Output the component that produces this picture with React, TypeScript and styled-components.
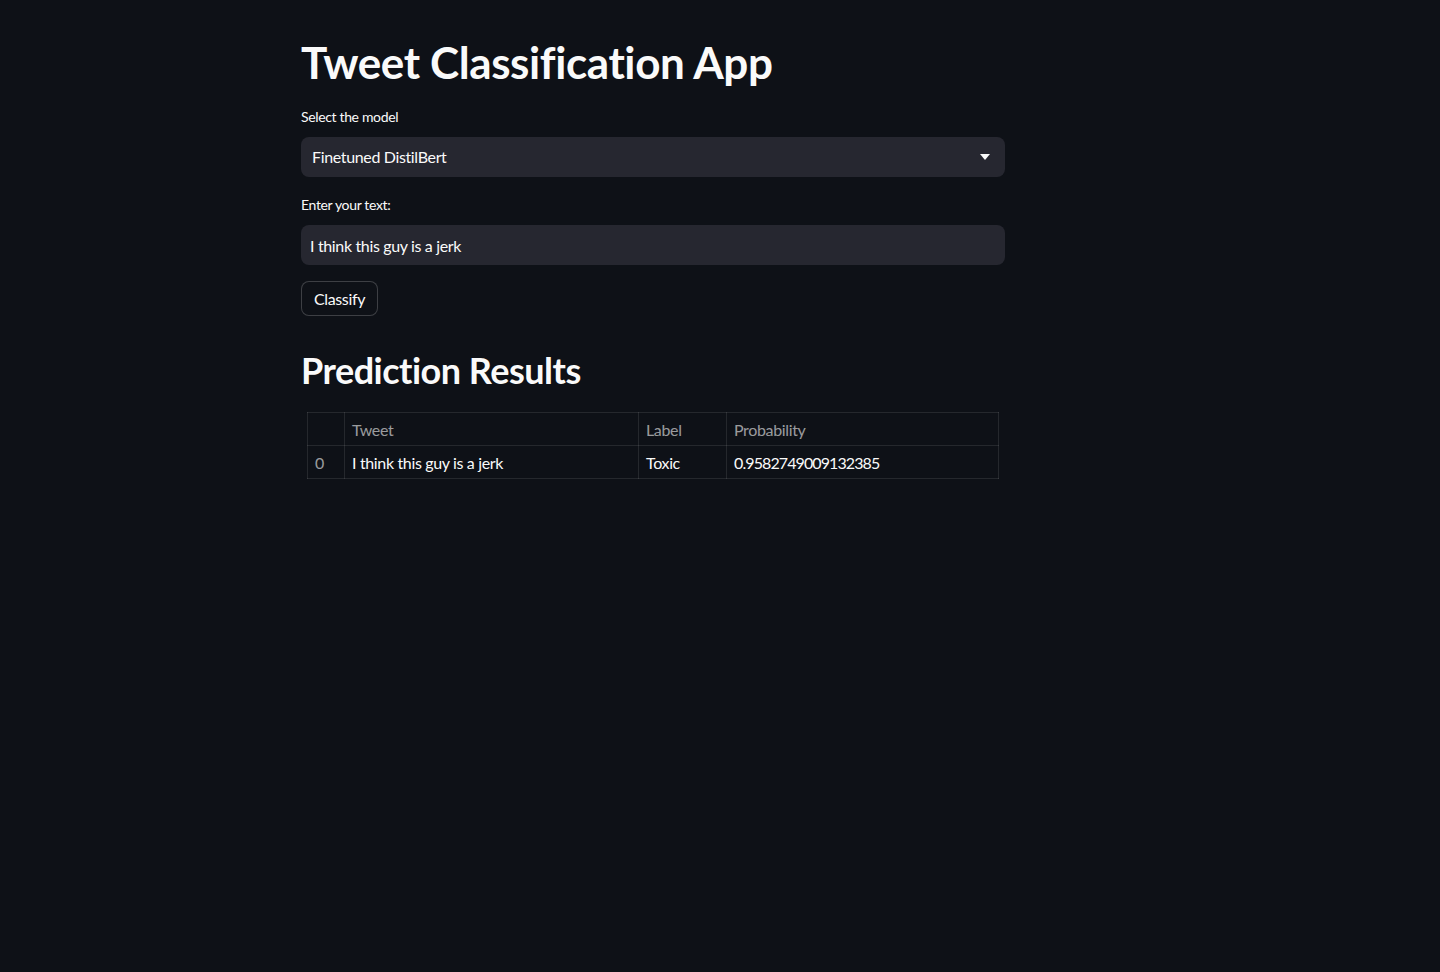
import React from 'react'
import styled, { createGlobalStyle } from 'styled-components'

const GlobalStyle = createGlobalStyle`
  html, body {
    margin: 0;
    padding: 0;
    background-color: #0e1117;
  }
  body {
    font-family: Lato, "Noto Sans", sans-serif;
    color: #fafafa;
    letter-spacing: -0.35px;
  }
`

const rows = [
  { index: 0, tweet: 'I think this guy is a jerk', label: 'Toxic', probability: '0.9582749009132385' },
]

export default function App() {
  return (
    <Page>
      <GlobalStyle />
      <Main>
        <Title>Tweet Classification App</Title>

        <Field>
          <FieldLabel>Select the model</FieldLabel>
          <SelectBox>
            <span>Finetuned DistilBert</span>
            <svg width="10" height="6" viewBox="0 0 10 6">
              <path d="M0 0 L10 0 L5 6 Z" fill="#fafafa" />
            </svg>
          </SelectBox>
        </Field>

        <Field>
          <FieldLabel>Enter your text:</FieldLabel>
          <TextInput defaultValue="I think this guy is a jerk" />
        </Field>

        <Button>Classify</Button>

        <Subtitle>Prediction Results</Subtitle>

        <Table>
          <thead>
            <tr>
              <Th $w={37}></Th>
              <Th $w={294}>Tweet</Th>
              <Th $w={88}>Label</Th>
              <Th>Probability</Th>
            </tr>
          </thead>
          <tbody>
            {rows.map(r => (
              <tr key={r.index}>
                <IndexCell>{r.index}</IndexCell>
                <Td>{r.tweet}</Td>
                <Td>{r.label}</Td>
                <NumberCell>{r.probability}</NumberCell>
              </tr>
            ))}
          </tbody>
        </Table>
      </Main>
    </Page>
  )
}

const Page = styled.div`
  min-height: 972px;
  background-color: #0e1117;
`

const Main = styled.div`
  width: 704px;
  margin-left: 301px;
  padding-top: 33px;
  display: flex;
  flex-direction: column;
`

const Title = styled.h1`
  margin: 0 0 16px 0;
  font-size: 44px;
  font-weight: 700;
  line-height: 58px;
  letter-spacing: -0.4px;
  color: #fafafa;
`

const Field = styled.div`
  display: flex;
  flex-direction: column;
  margin-bottom: 18px;
`

const FieldLabel = styled.label`
  font-size: 14px;
  line-height: 20px;
  height: 20px;
  margin-bottom: 10px;
  color: #fafafa;
`

const SelectBox = styled.div`
  height: 40px;
  box-sizing: border-box;
  background-color: #262730;
  border-radius: 8px;
  display: flex;
  align-items: center;
  justify-content: space-between;
  padding: 0 15px 1px 11px;
  font-size: 16px;
  color: #fafafa;
`

const TextInput = styled.input`
  height: 40px;
  box-sizing: border-box;
  background-color: #262730;
  border: none;
  border-radius: 8px;
  padding: 0 9px;
  font-family: Lato, "Noto Sans", sans-serif;
  letter-spacing: -0.35px;
  font-size: 16px;
  color: #fafafa;
  outline: none;
`

const Button = styled.button`
  align-self: flex-start;
  height: 35px;
  width: 77px;
  margin-top: -2px;
  box-sizing: border-box;
  background-color: #0e1117;
  border: 1px solid rgba(250, 250, 250, 0.2);
  border-radius: 8px;
  font-family: Lato, "Noto Sans", sans-serif;
  letter-spacing: -0.35px;
  font-size: 16px;
  color: #fafafa;
  padding: 0;
`

const Subtitle = styled.h2`
  margin: 32px 0 20px 0;
  font-size: 36px;
  font-weight: 700;
  line-height: 44px;
  letter-spacing: -0.5px;
  color: #fafafa;
`

const Table = styled.table`
  margin-left: 6px;
  width: 692px;
  border-collapse: collapse;
  font-size: 16px;
  border: 1px solid rgba(250, 250, 250, 0.1);
`

const Th = styled.th<{ $w?: number }>`
  width: ${p => (p.$w ? `${p.$w}px` : 'auto')};
  height: 33px;
  box-sizing: border-box;
  text-align: left;
  font-weight: 400;
  padding: 0 7px;
  color: rgba(250, 250, 250, 0.6);
  border: 1px solid rgba(250, 250, 250, 0.1);
`

const Td = styled.td`
  height: 33px;
  box-sizing: border-box;
  padding: 0 7px;
  color: #fafafa;
  border: 1px solid rgba(250, 250, 250, 0.1);
`

const IndexCell = styled(Td)`
  color: rgba(250, 250, 250, 0.6);
`

const NumberCell = styled(Td)`
  letter-spacing: -0.9px;
`
